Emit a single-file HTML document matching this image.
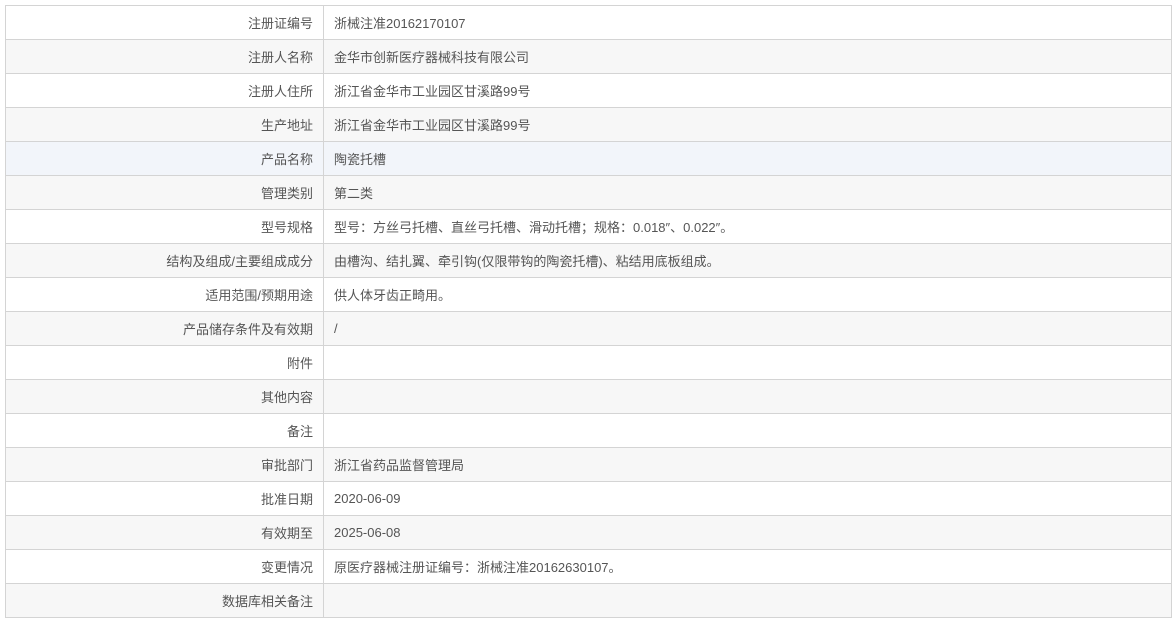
<!DOCTYPE html>
<html><head><meta charset="utf-8"><style>
body{margin:0;background:#fff;font-family:"Liberation Sans","Noto Sans CJK SC",sans-serif;}
table{position:absolute;left:5px;top:5px;width:1167px;border-collapse:collapse;font-size:13px;color:#555;}
td{border:1px solid #d4d4d4;height:34px;padding:0 10px;box-sizing:border-box;}
td.l{width:318px;text-align:right;}
tr:nth-child(even) td{background:#f7f7f7;}
tr.h td{background:#f2f5fa;}
</style></head><body>
<table>
<tr><td class="l">注册证编号</td><td>浙械注准20162170107</td></tr>
<tr><td class="l">注册人名称</td><td>金华市创新医疗器械科技有限公司</td></tr>
<tr><td class="l">注册人住所</td><td>浙江省金华市工业园区甘溪路99号</td></tr>
<tr><td class="l">生产地址</td><td>浙江省金华市工业园区甘溪路99号</td></tr>
<tr class="h"><td class="l">产品名称</td><td>陶瓷托槽</td></tr>
<tr><td class="l">管理类别</td><td>第二类</td></tr>
<tr><td class="l">型号规格</td><td>型号：方丝弓托槽、直丝弓托槽、滑动托槽；规格：0.018″、0.022″。</td></tr>
<tr><td class="l">结构及组成/主要组成成分</td><td>由槽沟、结扎翼、牵引钩(仅限带钩的陶瓷托槽)、粘结用底板组成。</td></tr>
<tr><td class="l">适用范围/预期用途</td><td>供人体牙齿正畸用。</td></tr>
<tr><td class="l">产品储存条件及有效期</td><td>/</td></tr>
<tr><td class="l">附件</td><td></td></tr>
<tr><td class="l">其他内容</td><td></td></tr>
<tr><td class="l">备注</td><td></td></tr>
<tr><td class="l">审批部门</td><td>浙江省药品监督管理局</td></tr>
<tr><td class="l">批准日期</td><td>2020-06-09</td></tr>
<tr><td class="l">有效期至</td><td>2025-06-08</td></tr>
<tr><td class="l">变更情况</td><td>原医疗器械注册证编号：浙械注准20162630107。</td></tr>
<tr><td class="l">数据库相关备注</td><td></td></tr>
</table>
</body></html>
